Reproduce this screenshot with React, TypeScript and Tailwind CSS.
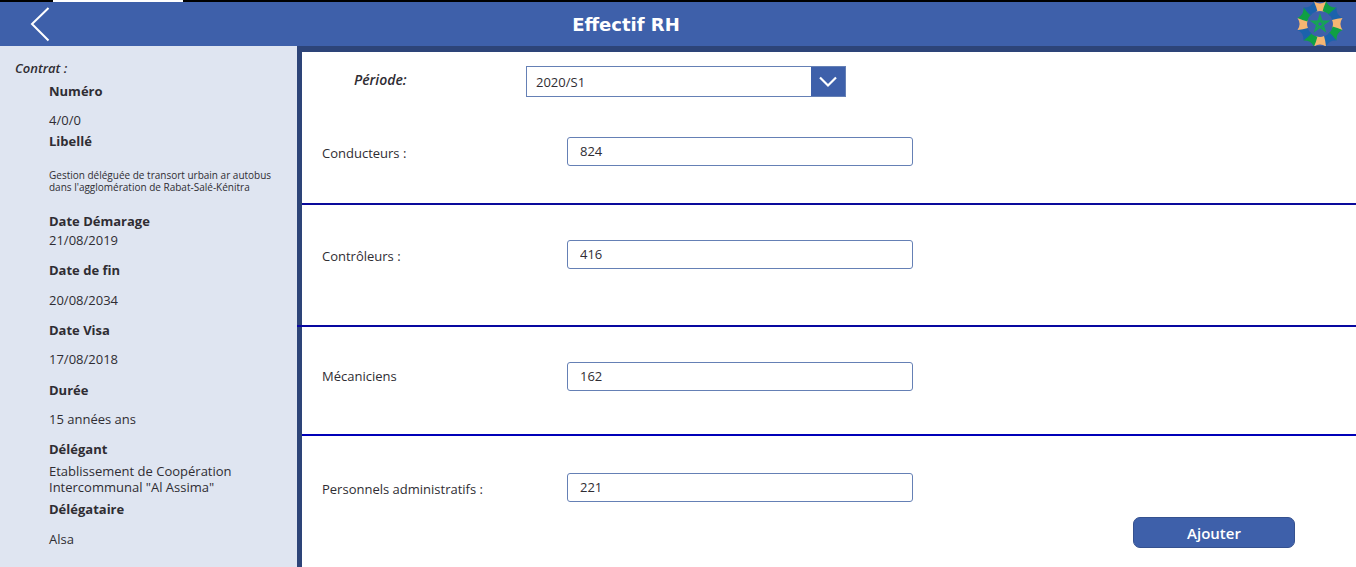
import { useState } from "react";

type Detail = { label: string; value: string; gap: string; top: string; small?: boolean };

const details: Detail[] = [
  { label: "Numéro", value: "4/0/0", top: "mt-[7px]", gap: "mt-[13px]" },
  { label: "Libellé", value: "Gestion déléguée de transort urbain ar autobus dans l'agglomération de Rabat-Salé-Kénitra", top: "mt-[5px]", gap: "mt-5", small: true },
  { label: "Date Démarage", value: "21/08/2019", top: "mt-5", gap: "mt-[3px]" },
  { label: "Date de fin", value: "20/08/2034", top: "mt-3.5", gap: "mt-3.5" },
  { label: "Date Visa", value: "17/08/2018", top: "mt-3.5", gap: "mt-[13px]" },
  { label: "Durée", value: "15 années ans", top: "mt-[15px]", gap: "mt-[13px]" },
  { label: "Délégant", value: 'Etablissement de Coopération Intercommunal "Al Assima"', top: "mt-3.5", gap: "mt-1.5" },
  { label: "Délégataire", value: "Alsa", top: "mt-1.5", gap: "mt-3.5" },
];

const staff = [
  { id: "conducteurs", label: "Conducteurs :", value: "824", labelPad: "pt-0.5", box: "pt-10 pb-[37px]", line: "bg-[#0a0a9b]" },
  { id: "controleurs", label: "Contrôleurs :", value: "416", labelPad: "pt-0.5", box: "pt-[35px] pb-14", line: "bg-[#0808a0] -ml-[5px]" },
  { id: "mecaniciens", label: "Mécaniciens", value: "162", labelPad: "pb-0.5", box: "pt-[35px] pb-[43px]", line: "bg-[#0000b8]" },
  { id: "administratifs", label: "Personnels administratifs :", value: "221", labelPad: "pt-0.5", box: "pt-[37px]", line: "" },
];

const petalColors = ["#f6b672", "#0fa044", "#1b62ac"];

function Emblem() {
  return (
    <svg viewBox="-24 -24 48 48" className="h-12 w-12 shrink-0" role="img" aria-label="Emblème">
      {Array.from({ length: 12 }, (_, i) => (
        <path
          key={i}
          transform={`rotate(${i * 30})`}
          fill={petalColors[i % 3]}
          d="M-6 -22.500 Q-3 -20.500 0 -20.400 Q3 -20.500 6 -22.500 Q5.500 -17 4 -12 Q0 -14 -4 -12 Q-5.500 -17 -6 -22.500Z"
        />
      ))}
      <path
        d="M0 -8 L4.7 6.5 L-7.6 -2.5 L7.6 -2.5 L-4.7 6.5Z"
        fill="none"
        stroke="#15a653"
        strokeWidth="1.8"
      />
    </svg>
  );
}

export default function App() {
  const [period, setPeriod] = useState("2020/S1");
  return (
    <div className="flex min-h-screen flex-col bg-white font-['Open_Sans',sans-serif] text-[13px] leading-4 text-[#2f2d33]">
      <div className="flex h-0.5 bg-black">
        <div className="ml-[53px] w-[130px] bg-white" />
      </div>
      <header className="flex h-11 items-center bg-[#3e60aa] pr-3 pl-[30px] text-white">
        <button type="button" aria-label="Retour" className="w-5">
          <svg viewBox="0 0 20 36" className="h-9 w-5" fill="none" stroke="currentColor" strokeWidth="2">
            <path d="M18.500 2 L2 18 L18.500 34.500" />
          </svg>
        </button>
        <h1 className="flex-1 pt-0.5 pr-[94px] text-center font-['DejaVu_Sans',sans-serif] text-lg font-bold">Effectif RH</h1>
        <Emblem />
      </header>
      <div className="flex flex-1">
        <aside className="w-[297px] shrink-0 bg-[#dfe5f1] pt-3.5 pb-5 pl-[15px]">
          <h2 className="font-semibold italic">Contrat :</h2>
          <dl className="pr-5 pl-[34px]">
            {details.map((d) => (
              <div key={d.label} className={d.top}>
                <dt className="font-bold">{d.label}</dt>
                <dd className={`${d.gap} ${d.small ? "text-[10px] leading-3" : ""}`}>{d.value}</dd>
              </div>
            ))}
          </dl>
        </aside>
        <main className="flex-1 border-t-[6px] border-l-[5px] border-[#2d4478]">
          <div className="flex items-center pt-3.5 pl-[52px]">
            <label htmlFor="periode" className="w-[172px] pb-1 text-sm leading-4 font-semibold italic">
              Période:
            </label>
            <div className="grid h-[31px] w-80 grid-cols-[1fr_34px] border border-[#6580b5]">
              <select
                id="periode"
                value={period}
                onChange={(e) => setPeriod(e.target.value)}
                className="col-span-2 col-start-1 row-start-1 appearance-none bg-transparent pl-[9px] outline-none"
              >
                <option>2020/S1</option>
              </select>
              <span className="pointer-events-none col-start-2 row-start-1 flex items-center justify-center bg-[#3e60aa]">
                <svg viewBox="0 0 18 12" className="h-3 w-[18px]" fill="none" stroke="#fff" strokeWidth="2.200">
                  <path d="M1 1.500 L9 9.500 L17 1.500" />
                </svg>
              </span>
            </div>
          </div>
          <form onSubmit={(e) => e.preventDefault()}>
            {staff.map((s) => (
              <div key={s.id}>
                <div className={`grid grid-cols-[245px_346px] items-center pl-5 ${s.box}`}>
                  <label htmlFor={s.id} className={s.labelPad}>{s.label}</label>
                  <input
                    id={s.id}
                    defaultValue={s.value}
                    className="h-[29px] rounded-[3px] border border-[#6580b5] bg-white pb-px pl-3 outline-none"
                  />
                </div>
                {s.line && <div className={`h-0.5 ${s.line}`} />}
              </div>
            ))}
            <div className="flex justify-end pt-[15px] pr-[61px]">
              <button
                type="submit"
                className="h-[31px] w-[162px] rounded-[7px] border border-[#35518f] bg-[#3e60aa] text-[15px] font-semibold text-white"
              >
                Ajouter
              </button>
            </div>
          </form>
        </main>
      </div>
    </div>
  );
}
